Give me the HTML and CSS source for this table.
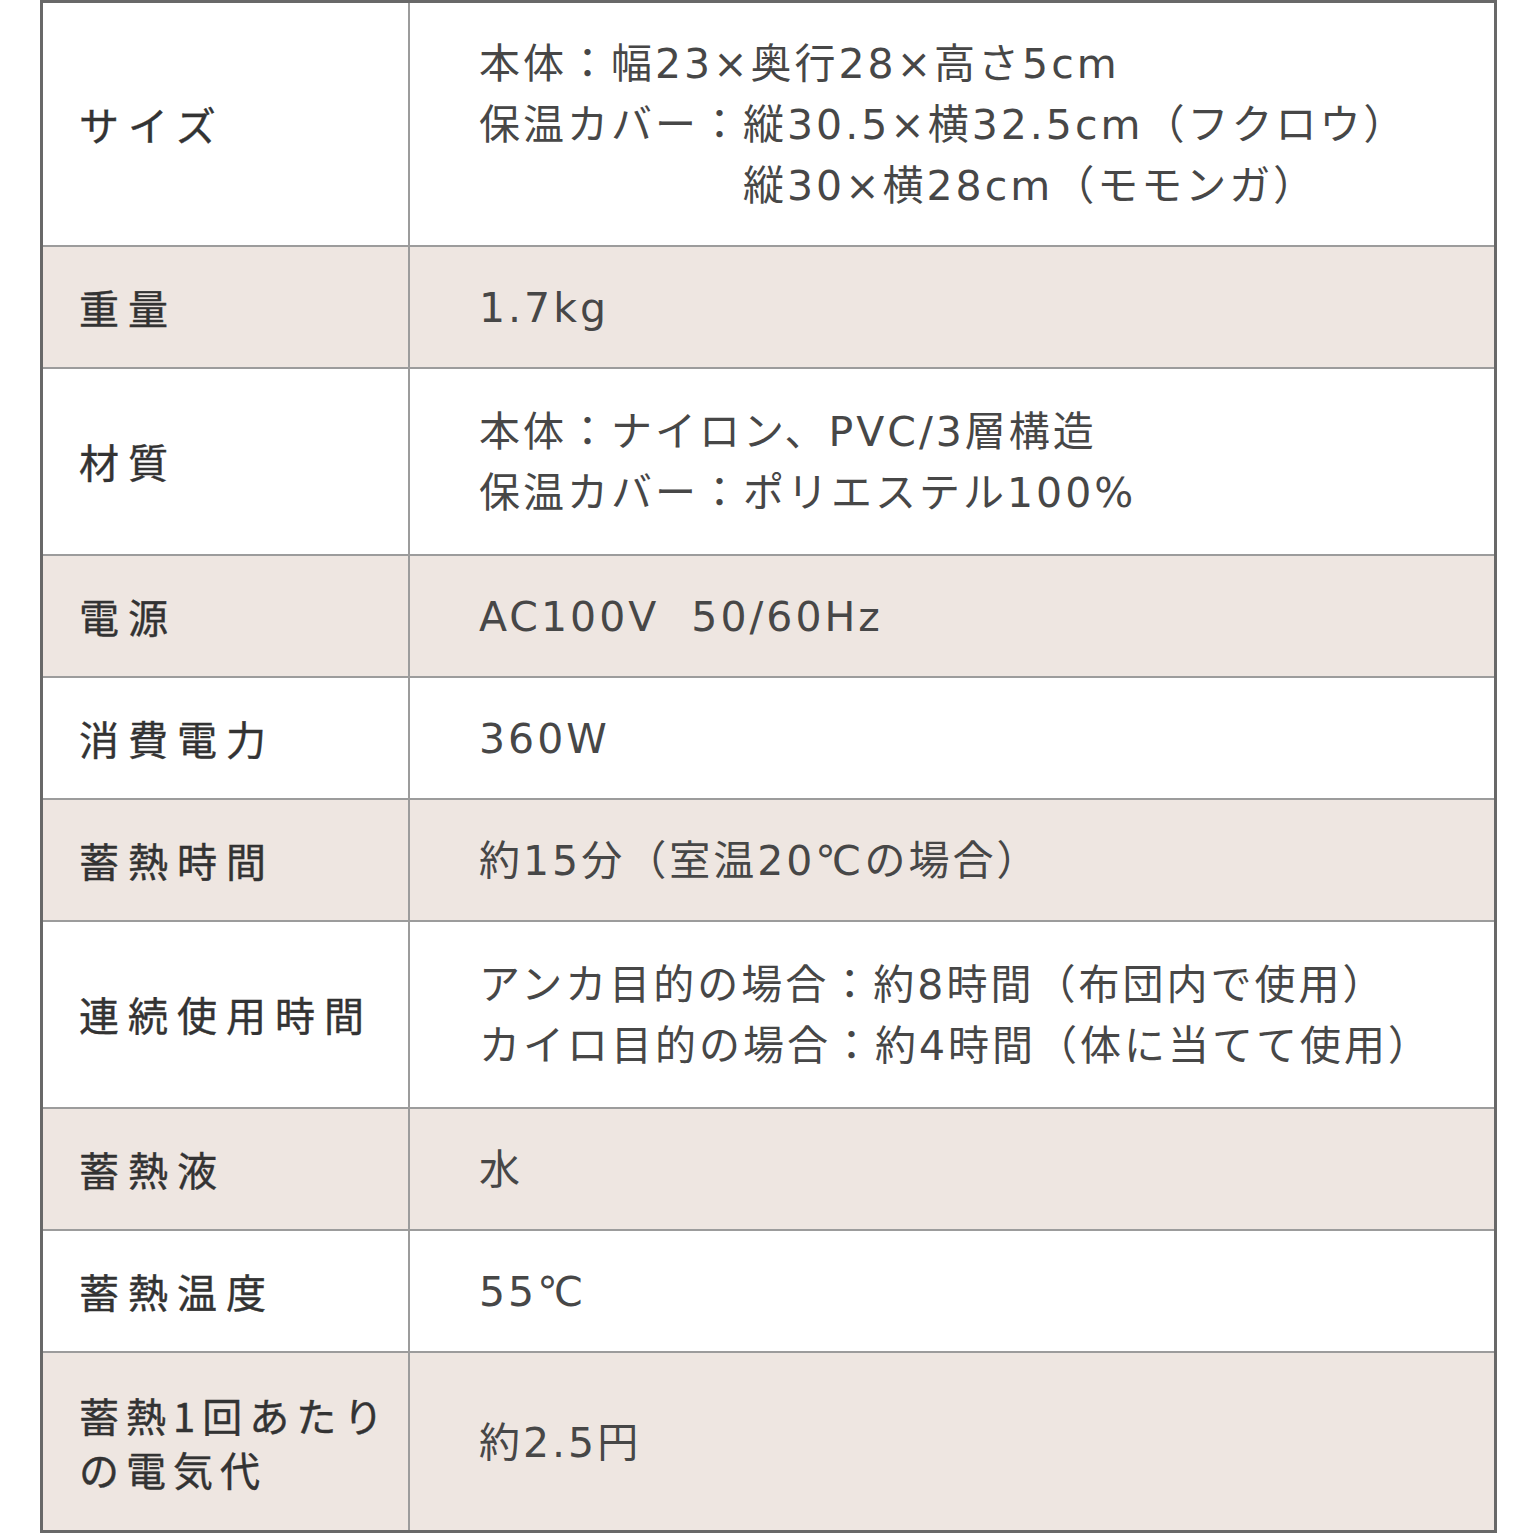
FILE: index.html
```html
<!DOCTYPE html>
<html lang="ja">
<head>
<meta charset="utf-8">
<title>仕様</title>
<link rel="stylesheet" href="styles.css">
</head>
<body>
<div class="spec">
  <div class="row row--3">
    <div class="label">サイズ</div>
    <div class="value">
      <div>本体：幅23×奥行28×高さ5cm</div>
      <div class="pair">
        <span>保温カバー：</span>
        <div>
          <div>縦30.5×横32.5cm（フクロウ）</div>
          <div>縦30×横28cm（モモンガ）</div>
        </div>
      </div>
    </div>
  </div>
  <div class="row row--alt">
    <div class="label">重量</div>
    <div class="value">1.7kg</div>
  </div>
  <div class="row row--2">
    <div class="label">材質</div>
    <div class="value">
      <div>本体：ナイロン、PVC/3層構造</div>
      <div>保温カバー：ポリエステル100%</div>
    </div>
  </div>
  <div class="row row--alt">
    <div class="label">電源</div>
    <div class="value">AC100V&nbsp;&nbsp;50/60Hz</div>
  </div>
  <div class="row">
    <div class="label">消費電力</div>
    <div class="value">360W</div>
  </div>
  <div class="row row--alt">
    <div class="label">蓄熱時間</div>
    <div class="value">約15分（室温20℃の場合）</div>
  </div>
  <div class="row row--2">
    <div class="label">連続使用時間</div>
    <div class="value">
      <div>アンカ目的の場合：約8時間（布団内で使用）</div>
      <div>カイロ目的の場合：約4時間（体に当てて使用）</div>
    </div>
  </div>
  <div class="row row--alt">
    <div class="label">蓄熱液</div>
    <div class="value">水</div>
  </div>
  <div class="row">
    <div class="label">蓄熱温度</div>
    <div class="value">55℃</div>
  </div>
  <div class="row row--alt row--last">
    <div class="label label--wrap">
      <div>蓄熱1回あたり</div>
      <div>の電気代</div>
    </div>
    <div class="value">約2.5円</div>
  </div>
</div>
</body>
</html>
```
FILE: styles.css
```css
html, body {
  margin: 0;
  padding: 0;
  background: #ffffff;
}

body {
  font-family: "Noto Sans CJK JP", "Noto Sans", sans-serif;
}

.spec {
  margin-left: 40px;
  width: 1457px;
  box-sizing: border-box;
  border: 3px solid #686868;
}

.row {
  display: grid;
  grid-template-columns: 367px 1fr;
  min-height: 122px;
  box-sizing: border-box;
  border-bottom: 2px solid #9c9c9c;
  background: #ffffff;
}

.row--alt {
  background: #eee6e1;
}

.row--2 {
  min-height: 187px;
}

.row--3 {
  min-height: 244px;
}

.row--last {
  min-height: 177px;
  border-bottom: none;
}

.label {
  display: flex;
  align-items: center;
  padding-left: 36px;
  border-right: 2px solid #9c9c9c;
  font-size: 40px;
  letter-spacing: 9px;
  font-weight: 400;
  -webkit-text-stroke: 0.4px #333333;
  color: #333333;
  line-height: 61px;
}

.label--wrap {
  flex-direction: column;
  align-items: flex-start;
  justify-content: center;
  line-height: 54px;
  letter-spacing: 7px;
}

.value {
  display: flex;
  flex-direction: column;
  justify-content: center;
  padding-left: 69px;
  padding-top: 3px;
  font-family: "DejaVu Sans", "Noto Sans CJK JP", sans-serif;
  font-size: 41px;
  letter-spacing: 3px;
  line-height: 61px;
  color: #474747;
  font-weight: 400;
}

.pair {
  display: flex;
}
```
